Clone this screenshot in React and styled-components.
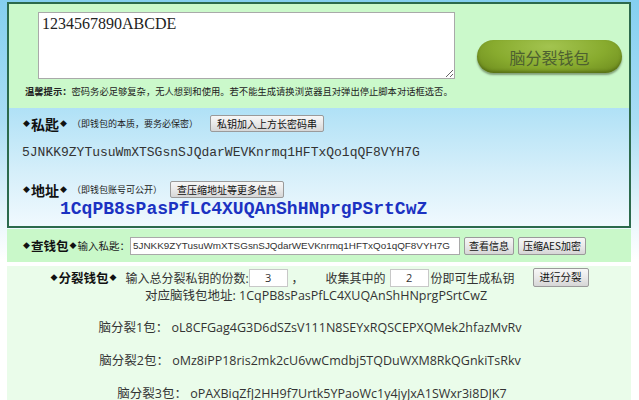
import React from "react";
import styled, { createGlobalStyle } from "styled-components";

const cjk = `"Noto Sans CJK SC", "Noto Sans", sans-serif`;

const Global = createGlobalStyle`
  html, body { margin: 0; padding: 0; }
  body {
    min-height: 400px;
    background: linear-gradient(to bottom, #84cff0 0px, #a9ddf4 120px, #e4f4fb 210px, #ffffff 260px);
    font-family: ${cjk};
    color: #222;
    overflow: hidden;
  }
`;

const Page = styled.div`
  padding: 2px 0 0 7px;
  width: 624px;
`;

const Box = styled.div`
  width: 624px;
  box-sizing: border-box;
  border: 2px solid #2c6a4c;
`;

const GreenSection = styled.div`
  background: #cbf9cb;
  padding: 8px 0 11px 0;
`;

const TopRow = styled.div`
  display: flex;
  align-items: flex-start;
  padding-left: 29px;
`;

const Secret = styled.textarea`
  width: 417px;
  height: 67px;
  box-sizing: border-box;
  border: 1px solid #a9a9a9;
  padding: 2px 3px;
  margin: 0;
  font-family: "Liberation Serif", serif;
  font-size: 16px;
  color: #222;
  background: #fff;
  resize: both;
  outline: none;
`;

const BigButton = styled.button`
  margin: 28px 0 0 22px;
  width: 145px;
  height: 33px;
  border: none;
  border-radius: 17px;
  background: radial-gradient(ellipse at 50% 20%, #a3c450 0%, #88ab2e 55%, #6a881c 100%);
  box-shadow: 0 2px 2px rgba(40, 50, 20, 0.45), inset 0 -2px 3px rgba(60, 80, 10, 0.5);
  font-family: ${cjk};
  font-size: 16px;
  color: #4d6030;
  padding: 0;
`;

const Tip = styled.div`
  margin-top: 6px;
  padding-left: 16px;
  font-size: 9.3px;
  line-height: 12px;
  color: #222;
  white-space: nowrap;
  b { font-weight: 700; }
`;

const BlueSection = styled.div`
  background: linear-gradient(to bottom, #b0e1f6 0%, #d6effa 55%, #f0f9fe 100%);
  padding: 7px 0 7px 13px;
`;

const LabelRow = styled.div`
  display: flex;
  align-items: center;
  height: 17px;
  white-space: nowrap;
`;

const Diamond = styled.span`
  font-size: 7px;
  line-height: 1;
  margin: 0 1px;
  color: #111;
`;

const Title = styled.span`
  font-family: ${cjk};
  font-weight: 700;
  font-size: ${(p) => p.$size || 14}px;
  color: #111;
`;

const Hint = styled.span`
  font-size: 9px;
  color: #222;
  margin-left: 4px;
`;

const SmallButton = styled.button`
  height: ${(p) => p.$h || 17}px;
  margin-left: ${(p) => p.$ml || 0}px;
  padding: 0 ${(p) => p.$px || 6}px;
  border: 1px solid #9a9a9a;
  border-radius: 2px;
  background: linear-gradient(to bottom, #f7f7f7 0%, #e9e9e9 50%, #d6d6d6 100%);
  font-family: ${cjk};
  font-size: ${(p) => p.$fs || 10}px;
  color: #111;
  white-space: nowrap;
  line-height: 1;
`;

const KeyText = styled.div`
  margin-top: 13px;
  font-family: "Liberation Mono", monospace;
  font-size: 13px;
  line-height: 15px;
  color: #333;
`;

const AddressRow = styled(LabelRow)`
  margin-top: 21px;
`;

const Address = styled.div`
  padding-left: 38px;
  margin-top: 1px;
  font-family: "Liberation Mono", monospace;
  font-weight: 700;
  font-size: 18px;
  line-height: 20px;
  color: #1b32c2;
`;

const CheckRow = styled.div`
  margin-top: 1px;
  width: 624px;
  height: 33px;
  background: #c9f8c9;
  display: flex;
  align-items: center;
  padding-left: 15px;
  box-sizing: border-box;
  white-space: nowrap;
`;

const Label = styled.span`
  font-size: ${(p) => p.$fs || 10.5}px;
  color: #222;
  margin-left: ${(p) => p.$ml || 0}px;
`;

const KeyInput = styled.input`
  width: 330px;
  height: 18px;
  box-sizing: border-box;
  border: 1px solid #a9a9a9;
  padding: 0 2px;
  margin: 0;
  font-family: "Liberation Sans", sans-serif;
  font-size: 9.9px;
  color: #333;
  background: #fff;
`;

const SplitSection = styled.div`
  margin-top: 4px;
  width: 624px;
  height: 140px;
  background: #eafcea;
  padding-top: 2px;
  box-sizing: border-box;
  font-family: "Open Sans", ${cjk};
  color: #333;
`;

const SplitRow = styled.div`
  display: flex;
  align-items: center;
  justify-content: center;
  height: 19px;
  white-space: nowrap;
`;

const NumInput = styled.input`
  width: 39px;
  height: 18px;
  box-sizing: border-box;
  border: 1px solid #c8c8c8;
  text-align: center;
  font-family: "Open Sans", sans-serif;
  font-size: 11px;
  color: #333;
  padding: 0;
  margin: 0 0 0 ${(p) => p.$ml || 0}px;
  background: #fff;
`;

const Text = styled.span`
  font-size: 12px;
  margin-left: ${(p) => p.$ml || 0}px;
  margin-right: ${(p) => p.$mr || 0}px;
  color: #333;
`;

const Line = styled.div`
  text-align: center;
  font-size: 12.5px;
  line-height: 18px;
  height: 18px;
  margin-top: ${(p) => p.$mt || 0}px;
  color: #333;
  white-space: nowrap;
  padding-right: ${(p) => p.$pr || 0}px;
`;

export default function App() {
  return (
    <>
      <Global />
      <Page>
        <Box>
          <GreenSection>
            <TopRow>
              <Secret defaultValue="1234567890ABCDE" />
              <BigButton>脑分裂钱包</BigButton>
            </TopRow>
            <Tip>
              <b>温馨提示：</b>密码务必足够复杂，无人想到和使用。若不能生成请换浏览器且对弹出停止脚本对话框选否。
            </Tip>
          </GreenSection>
          <BlueSection>
            <LabelRow>
              <Diamond>◆</Diamond>
              <Title>私匙</Title>
              <Diamond>◆</Diamond>
              <Hint>（即钱包的本质，要务必保密）</Hint>
              <SmallButton $ml={12}>私钥加入上方长密码串</SmallButton>
            </LabelRow>
            <KeyText>5JNKK9ZYTusuWmXTSGsnSJQdarWEVKnrmq1HFTxQo1qQF8VYH7G</KeyText>
            <AddressRow>
              <Diamond>◆</Diamond>
              <Title>地址</Title>
              <Diamond>◆</Diamond>
              <Hint>（即钱包账号可公开）</Hint>
              <SmallButton $ml={8}>查压缩地址等更多信息</SmallButton>
            </AddressRow>
            <Address>1CqPB8sPasPfLC4XUQAnShHNprgPSrtCwZ</Address>
          </BlueSection>
        </Box>
        <CheckRow>
          <Diamond>◆</Diamond>
          <Title $size={12.5}>查钱包</Title>
          <Diamond>◆</Diamond>
          <Label>输入私匙：</Label>
          <KeyInput defaultValue="5JNKK9ZYTusuWmXTSGsnSJQdarWEVKnrmq1HFTxQo1qQF8VYH7G" />
          <SmallButton $h={18} $ml={4} $px={4} $fs={10}>查看信息</SmallButton>
          <SmallButton $h={18} $ml={4} $px={4} $fs={10}>压缩AES加密</SmallButton>
        </CheckRow>
        <SplitSection>
          <SplitRow>
            <Diamond>◆</Diamond>
            <Title $size={12.5}>分裂钱包</Title>
            <Diamond>◆</Diamond>
            <Text $ml={8}>输入总分裂私钥的份数:</Text>
            <NumInput defaultValue="3" />
            <Text $ml={4} $mr={22}>，</Text>
            <Text>收集其中的</Text>
            <NumInput defaultValue="2" $ml={4} />
            <Text $ml={2}>份即可生成私钥</Text>
            <SmallButton $h={19} $ml={18} $fs={10.5}>进行分裂</SmallButton>
          </SplitRow>
          <Line $pr={6}>对应脑钱包地址: 1CqPB8sPasPfLC4XUQAnShHNprgPSrtCwZ</Line>
          <Line $mt={14} $pr={18}>脑分裂1包： oL8CFGag4G3D6dSZsV111N8SEYxRQSCEPXQMek2hfazMvRv</Line>
          <Line $mt={15} $pr={18}>脑分裂2包： oMz8iPP18ris2mk2cU6vwCmdbj5TQDuWXM8RkQGnkiTsRkv</Line>
          <Line $mt={15} $pr={14}>脑分裂3包： oPAXBiqZfJ2HH9f7Urtk5YPaoWc1y4jyJxA1SWxr3i8DJK7</Line>
        </SplitSection>
      </Page>
    </>
  );
}
